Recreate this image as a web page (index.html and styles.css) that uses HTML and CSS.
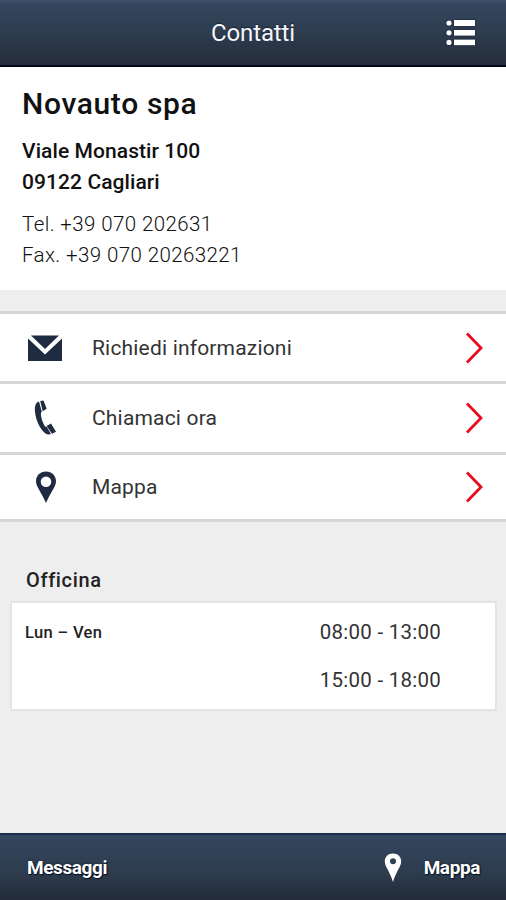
FILE: index.html
```
<!DOCTYPE html>
<html lang="it">
<head>
   <meta charset="utf-8">
   <title>Contatti</title>
   <link rel="stylesheet" href="styles.css">
</head>
<body>
<div id="hd" role="banner">
   <h1>Contatti</h1>
   <svg class="menu" width="30" height="28" viewBox="0 0 30 28" fill="#fff">
      <circle cx="3" cy="4" r="2.6"/><rect x="8" y="1" width="21" height="6"/>
      <circle cx="3" cy="13.8" r="2.6"/><rect x="8" y="11" width="21" height="5.6"/>
      <circle cx="3" cy="23.4" r="2.6"/><rect x="8" y="20.6" width="21" height="5.6"/>
   </svg>
</div>

<div id="bd" role="main">
   <div class="info">
      <h2>Novauto spa</h2>
      <p class="address"><span>Viale Monastir 100</span><br><span>09122 Cagliari</span></p>
      <p class="phone"><span>Tel. +39 070 202631</span><br><span>Fax. +39 070 20263221</span></p>
   </div>

   <ul class="actions">
      <li>
         <svg class="icon" width="36" height="36" viewBox="0 0 36 36" fill="#1e2b40">
            <path d="M4 5.500h28L18 19z"/>
            <path d="M1 8.500L18 24.500 35 8.500V31H1z"/>
         </svg>
         <span class="label">Richiedi informazioni</span>
         <svg class="arrow" width="20" height="34" viewBox="0 0 20 34"><path d="M2 2.500L16 17 2 31.500"/></svg>
      </li>
      <li>
         <svg class="icon" width="36" height="36" viewBox="0 0 36 36" fill="#1e2b40">
            <path d="M12 1.500C8.500 2.500 7.500 6.500 8 12c.8 8 5 17.500 10.500 21.500 1.800 1.200 3.800 1 5.500.5L19.500 26.500c-1 .5-1.500 0-2.200-1.300-1.700-3.300-2.800-6.200-3.300-9.700-.2-2 0-3 .8-3.700z"/>
            <path d="M13.200 1l3.300-.5 3.200 8.300-4 2.500zM19.600 26l4.400-2.500 5 8.300-4 2z"/>
         </svg>
         <span class="label">Chiamaci ora</span>
         <svg class="arrow" width="20" height="34" viewBox="0 0 20 34"><path d="M2 2.500L16 17 2 31.500"/></svg>
      </li>
      <li>
         <svg class="icon" width="36" height="36" viewBox="0 0 36 36" fill="#1e2b40" fill-rule="evenodd">
            <path d="M19 2.500C13 2.500 9 6.800 9 12.200 9 17.500 14 22.500 19 34c5-11.500 10-16.500 10-21.800C29 6.800 25 2.500 19 2.500zM19 7.500a5.300 5.300 0 1 1 0 10.600 5.300 5.300 0 0 1 0-10.600z"/>
         </svg>
         <span class="label">Mappa</span>
         <svg class="arrow" width="20" height="34" viewBox="0 0 20 34"><path d="M2 2.500L16 17 2 31.500"/></svg>
      </li>
   </ul>

   <h3>Officina</h3>
   <div class="hours">
      <span class="days">Lun – Ven</span>
      <div class="times"><span>08:00 - 13:00</span><span>15:00 - 18:00</span></div>
   </div>
</div>

<div id="ft">
   <a class="messages">Messaggi</a>
   <a class="maplink">
      <svg width="18" height="30" viewBox="0 0 18 30" fill="#fff" fill-rule="evenodd">
         <path d="M9 .5C4 .5.800 4 .800 8.500c0 5 4.700 9 8.200 20.500 3.500-11.500 8.200-15.500 8.200-20.500C17.200 4 14 .5 9 .5zM9 5.200a3 3 0 1 1 0 6 3 3 0 0 1 0-6z"/>
      </svg>
      <span>Mappa</span>
   </a>
</div>
</body>
</html>
```
FILE: styles.css
```
* {
      box-sizing: border-box;
}

body {
      margin: 0;
      height: 900px;
      display: flex;
      flex-direction: column;
      overflow: hidden;
      background: #eee;
      color: #222;
      font-family: Roboto, Helvetica, Arial, sans-serif;
}

h1, h2, h3, p, ul {
      margin: 0;
      padding: 0;
}

span {
      white-space: nowrap;
}

/* header */
#hd {
      height: 67px;
      display: grid;
      grid-template-columns: 1fr auto 1fr;
      align-items: center;
      background: linear-gradient(#40506a 0, #34465f 4px, #2e3d4f 32px, #252d3b 100%);
      border-bottom: 2px solid #050814;
}

#hd h1 {
      grid-column: 2;
      font-size: 24px;
      line-height: 30px;
      font-weight: 400;
      letter-spacing: -0.1px;
      color: #f4f6fa;
      text-shadow: 0 -1px 1px #1a2433;
}

#hd .menu {
      justify-self: end;
      margin-right: 30px;
      filter: drop-shadow(0 0 1px #0b1730);
}

/* company details */
.info {
      height: 223px;
      padding: 18px 22px 0;
      background: #fff;
}

.info h2 {
      font-size: 30px;
      line-height: 37px;
      font-weight: 500;
      letter-spacing: 0.65px;
      color: #111;
}

.info p {
      line-height: 31px;
}

.address {
      margin-top: 14px;
      font-size: 21px;
      font-weight: 500;
      letter-spacing: 0.08px;
      color: #111;
}

.phone {
      margin-top: 11px;
      font-size: 20.5px;
      font-weight: 300;
      letter-spacing: 0.4px;
      color: #111;
}

/* action rows */
.actions {
      margin-top: 21px;
      list-style: none;
      background: #fff;
      border-top: 3px solid #d6d6d6;
}

.actions li {
      height: 70px;
      display: flex;
      align-items: center;
      padding: 0 21px 0 27px;
      border-bottom: 3px solid #d6d6d6;
}

.actions li:nth-child(2) {
      height: 71px;
}

.actions li:last-child {
      height: 67px;
}

.icon {
      margin-right: 29px;
}

.label {
      flex: 1;
      font-size: 21px;
      font-weight: 400;
      letter-spacing: 0.18px;
      color: #333;
}

.arrow {
      fill: none;
      stroke: #ea0a1e;
      stroke-width: 2.8;
}

/* opening hours */
h3 {
      margin: 43px 0 0 26px;
      font-size: 20px;
      line-height: 30px;
      font-weight: 500;
      letter-spacing: 0.65px;
}

.hours {
      height: 110px;
      margin: 6px 9px 0 10px;
      padding: 5px 54px 0 13px;
      display: flex;
      justify-content: space-between;
      background: #fff;
      border: 2px solid #e4e4e4;
}

.days {
      font-size: 16.5px;
      line-height: 50px;
      font-weight: 500;
      letter-spacing: 0.35px;
}

.times {
      display: flex;
      flex-direction: column;
      font-size: 20.5px;
      line-height: 48px;
      letter-spacing: 0.25px;
      color: #333;
}

/* bottom bar */
#ft {
      height: 67px;
      margin-top: auto;
      padding: 0 26px 0 27px;
      display: flex;
      align-items: center;
      justify-content: space-between;
      background: linear-gradient(#34455f, #2e3d4f 55%, #232c38);
      border-top: 2px solid #19304a;
      color: #fff;
      font-size: 19px;
      font-weight: 700;
      letter-spacing: -0.4px;
      text-shadow: 0 0 2px #0b1426, 1px 1px 1px #0b1426;
}

.maplink {
      display: flex;
      align-items: center;
      gap: 22px;
}
```
